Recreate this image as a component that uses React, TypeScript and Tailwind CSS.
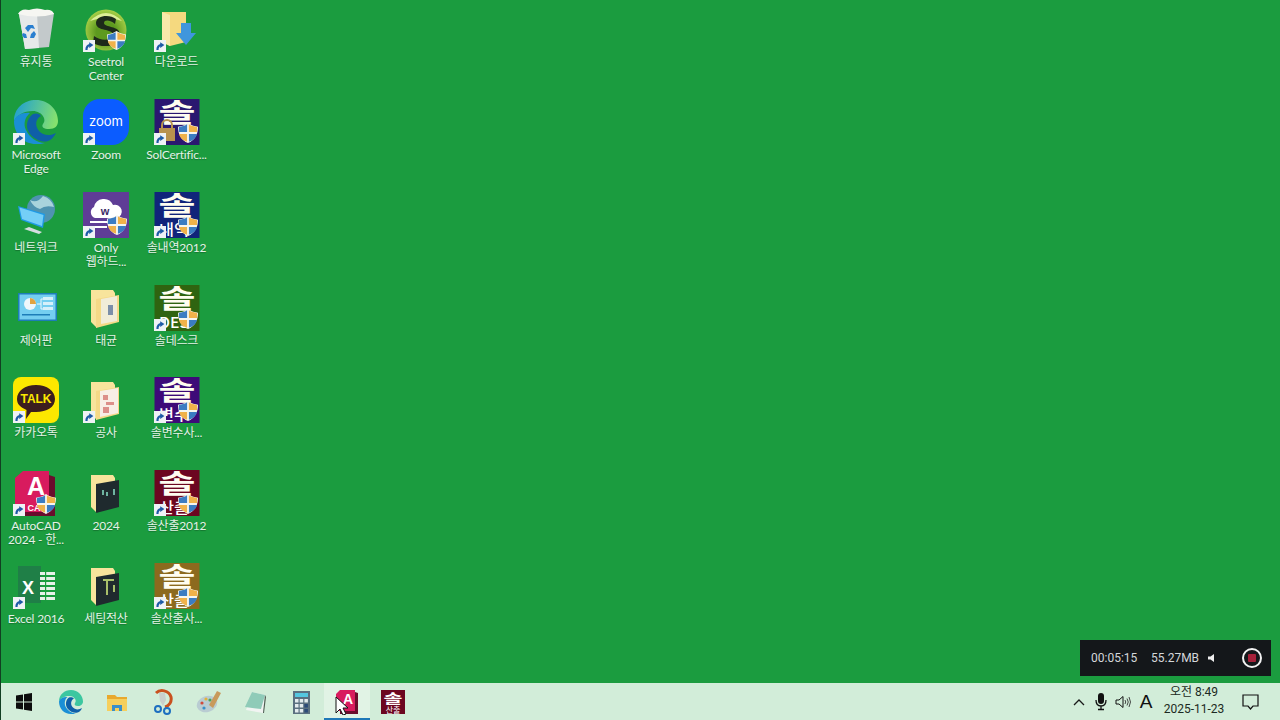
import type { ReactNode } from 'react';

const FONT = "font-['Lato','Noto_Sans_CJK_KR',sans-serif]";
const KR = "'Noto Sans CJK KR',sans-serif";
const ARIAL = "'Liberation Sans',sans-serif";

// small overlays used by most desktop icons
function Shield({ x = 24, y = 24, s = 20 }: { x?: number; y?: number; s?: number }) {
  return (
    <g transform={`translate(${x} ${y}) scale(${s / 22})`}>
      <path d="M11 0 C15 3 19 3.5 22 4 C22 13 18 19 11 22 C4 19 0 13 0 4 C3 3.5 7 3 11 0Z" fill="#f6f6ef" />
      <path d="M12 1.5 C15 3.5 18 4 21 4.5 L21 10 L12 10Z" fill="#f0b24a" />
      <path d="M1 12 L10 12 L10 20.5 C5 19 2 16 1 12Z" fill="#f0b24a" />
      <path d="M10 1.5 C7 3.5 4 4 1 4.5 L1 10 L10 10Z" fill="#3b7cc2" />
      <path d="M12 12 L21 12 C20 16 17 19 12 20.5Z" fill="#3b7cc2" />
    </g>
  );
}

function Shortcut({ x = 0, y = 34 }: { x?: number; y?: number }) {
  return (
    <g transform={`translate(${x} ${y})`}>
      <rect width="12" height="12" fill="#eef2f5" />
      <path d="M3.5 10 C3.2 7 5 5.2 7 5" fill="none" stroke="#1d5aa6" strokeWidth="2.2" />
      <path d="M6.2 2.2 L10.4 5 L6.2 8Z" fill="#1d5aa6" />
    </g>
  );
}

function Folder({ sheet = '#f5d987', children }: { sheet?: string; children?: ReactNode }) {
  return (
    <g>
      <path d="M8 5 H30 L32 8 V12 L14 16 V43 L8 37Z" fill="#f8e49c" />
      <path d="M13 14 L36 10 V37 L13 43Z" fill={sheet} />
      {children}
    </g>
  );
}

function SolIcon({ bg, sub, lock }: { bg: string; sub?: string; lock?: boolean }) {
  return (
    <>
      <rect x="0.5" width="45" height="46" fill={bg} />
      <text x="23" y="23" textAnchor="middle" fontSize="26" fontWeight="700" fill="#fffdf0" fontFamily={KR} textLength="37" lengthAdjust="spacingAndGlyphs">솔</text>
      {sub && (
        <text x="20" y="43" textAnchor="middle" fontSize="15" fontWeight="500" fill="#ffffff" fontFamily={KR} textLength="30" lengthAdjust="spacingAndGlyphs">{sub}</text>
      )}
      {lock && (
        <g>
          <rect x="5" y="29" width="16" height="13" fill="#b8924e" />
          <path d="M8 29 V26 a5 5 0 0 1 10 0 V29" fill="none" stroke="#b8924e" strokeWidth="2" />
        </g>
      )}
      <Shield x={24} y={24} s={20} />
      <Shortcut />
    </>
  );
}

const icons: Record<string, ReactNode> = {
  bin: (
    <>
      <path d="M6 8 L41 7 L36 41 L12 43Z" fill="#c3c9cb" />
      <path d="M6 8 L24 8 L26 42 L12 43Z" fill="#e6e9e9" />
      <path d="M5 8 Q8 2 16 4 Q24 1 32 4 Q39 3 41 8 Q24 13 5 8Z" fill="#f6f6f2" />
      <path d="M15 19 l5 0 l2 4 l-4 -1 l-3 4 l-3 -4Z M10 27 l3 1 l1 4 l-3 0 l-2 -3Z M21 25 l2 3 l-2 4 l-4 0 l1 -4Z" fill="#2a7fd0" />
    </>
  ),
  seetrol: (
    <>
      <defs>
        <radialGradient id="seeA" cx="0.5" cy="0.55" r="0.6">
          <stop offset="0.4" stopColor="#5d9a1f" />
          <stop offset="1" stopColor="#b5d94e" />
        </radialGradient>
      </defs>
      <circle cx="23" cy="24" r="20.5" fill="url(#seeA)" />
      <path d="M7 15 Q23 -1 39 15 Q23 9 7 15Z" fill="#dcee96" />
      <path d="M33 13 C27 8 13 9 13 17 C13 26 30 22 30 29 C30 35 17 35 11 30 L10 37 C18 42 37 42 37 29 C37 19 21 22 21 17 C21 13 28 14 32 18Z" fill="#1d2a1a" />
      <Shield x={24} y={25} s={19} />
      <Shortcut />
    </>
  ),
  download: (
    <>
      <path d="M8 6 H32 V36 L16 40 L8 36Z" fill="#f5d97f" />
      <path d="M8 6 L16 9 L16 40 L8 36Z" fill="#fae9aa" />
      <path d="M27 17 H37 V27 H42 L32 39 L22 27 H27Z" fill="#3f96dd" />
      <Shortcut />
    </>
  ),
  edge: (
    <>
      <defs>
        <linearGradient id="edgeA" x1="0" y1="0.3" x2="1" y2="0.5">
          <stop offset="0" stopColor="#1f9fd0" />
          <stop offset="1" stopColor="#86e16e" />
        </linearGradient>
      </defs>
      <path d="M1 22 C1 9 11 1 23 1 C36 1 45 11 45 22 C45 27 42 30 36 30 C31 30 28 28 30 25 C31 23 32 22 31 19 C29 14 24 12 20 12 C10 12 3 17 1 22Z" fill="url(#edgeA)" />
      <path d="M1 22 C3 16 10 13 17 14 C12 18 10 25 13 31 C16 38 24 44 32 44 C29 45 26 45 23 45 C10 45 1 35 1 22Z" fill="#1a8fd6" />
      <path d="M20 15 C13 20 12 29 17 35 C22 41 30 44 35 42 C38 41 41 38 43 34 C38 37 30 37 26 32 C22 27 22 20 28 17 C26 14 23 14 20 15Z" fill="#0f5fa8" />
      <Shortcut />
    </>
  ),
  zoom: (
    <>
      <rect width="46" height="46" rx="17" fill="#0b5cff" />
      <text x="23" y="27" textAnchor="middle" fontSize="13" fontWeight="400" fill="#fff" fontFamily="Inter,sans-serif">zoom</text>
      <Shortcut />
    </>
  ),
  network: (
    <>
      <circle cx="28" cy="17" r="14" fill="#4f93b0" />
      <path d="M17 8 Q24 12 30 4 Q39 7 41 15 Q32 13 27 17 Q20 15 17 8Z" fill="#a9d3dc" />
      <path d="M11 37 L26 42 L29 40 L16 35Z" fill="#d6dde0" />
      <path d="M5 14 L32 22 L30 36 L8 28Z" fill="#1e9ae6" />
      <path d="M6.5 15.5 L30.5 23 L29 34 L9 27Z" fill="#74cff7" />
    </>
  ),
  only: (
    <>
      <rect width="46" height="46" fill="#5f3d96" />
      <path d="M12 26 a6 6 0 0 1 -1 -11 a10 10 0 0 1 19 -2 a6.5 6.5 0 0 1 4 13Z" fill="#fff" />
      <text x="22" y="23" textAnchor="middle" fontSize="11" fontWeight="700" fill="#3b2a66" fontFamily={ARIAL}>w</text>
      <path d="M7 30 H28 M7 35 H24" stroke="#fff" strokeWidth="2" />
      <Shield x={24} y={23} s={20} />
      <Shortcut />
    </>
  ),
  panel: (
    <>
      <rect x="5" y="8" width="39" height="28" fill="#1d7db8" />
      <rect x="6.5" y="9.5" width="36" height="25" fill="#74cef0" />
      <circle cx="17" cy="19" r="6" fill="#eef7fb" />
      <path d="M17 19 V13 a6 6 0 0 1 6 6Z" fill="#e2a340" />
      <rect x="30" y="12" width="10" height="3" fill="#d6f0fa" />
      <rect x="30" y="17" width="10" height="3" fill="#d6f0fa" />
      <rect x="30" y="22" width="10" height="3" fill="#d6f0fa" />
      <path d="M24 19 H28 V14 H30 M28 19 V24 H30" fill="none" stroke="#eaf7fc" strokeWidth="1" />
      <rect x="9" y="29" width="28" height="1.5" fill="#1d7db8" />
    </>
  ),
  kakao: (
    <>
      <rect width="46" height="46" rx="8" fill="#fce800" />
      <path d="M23 8 C34 8 42 14 42 22 C42 30 34 35 23 35 L18 35 L13 42 L13.5 33 C7 30 4 27 4 22 C4 14 12 8 23 8Z" fill="#3b1e1e" />
      <text x="23" y="26" textAnchor="middle" fontSize="12" fontWeight="700" fill="#fce800" fontFamily={ARIAL}>TALK</text>
      <Shortcut />
    </>
  ),
  acad: (
    <>
      <path d="M2 8 L10 1 L36 1 L36 42 L2 42Z" fill="#d81b5e" />
      <path d="M36 5 L42 7 L42 46 L10 46 L10 42 L36 42Z" fill="#6a0d2c" />
      <text x="23" y="25" textAnchor="middle" fontSize="25" fontWeight="700" fill="#fff" fontFamily={ARIAL}>A</text>
      <text x="21" y="41" textAnchor="middle" fontSize="9" fontWeight="700" fill="#fff" fontFamily={ARIAL}>CA</text>
      <Shield x={23} y={24} s={20} />
      <Shortcut />
    </>
  ),
  excel: (
    <>
      <rect x="5" y="3" width="23" height="37" fill="#1f7f47" />
      <text x="15" y="31" textAnchor="middle" fontSize="18" fontWeight="700" fill="#fff" fontFamily={ARIAL}>X</text>
      {[9, 14, 19, 24, 29, 34].map((y) => (
        <rect key={y} x="27" y={y} width="15" height="3" fill="#e8f1ea" />
      ))}
      <rect x="32" y="9" width="1.2" height="28" fill="#1b9c3f" />
      <Shortcut />
    </>
  ),
};

const desktop: { label: string[]; icon: ReactNode }[] = [
  { label: ['휴지통'], icon: icons.bin },
  { label: ['Seetrol', 'Center'], icon: icons.seetrol },
  { label: ['다운로드'], icon: icons.download },
  { label: ['Microsoft', 'Edge'], icon: icons.edge },
  { label: ['Zoom'], icon: icons.zoom },
  { label: ['SolCertific...'], icon: <SolIcon bg="#2a1770" lock /> },
  { label: ['네트워크'], icon: icons.network },
  { label: ['Only', '웹하드...'], icon: icons.only },
  { label: ['솔내역2012'], icon: <SolIcon bg="#10247a" sub="내역" /> },
  { label: ['제어판'], icon: icons.panel },
  {
    label: ['태균'],
    icon: (
      <Folder>
        <path d="M18 14 L34 11 V36 L18 39Z" fill="#f1ecd8" />
        <path d="M25 20 h5 v10 h-5z" fill="#7c8ea8" />
      </Folder>
    ),
  },
  { label: ['솔데스크'], icon: <SolIcon bg="#2f6410" sub="DES" /> },
  { label: ['카카오톡'], icon: icons.kakao },
  {
    label: ['공사'],
    icon: (
      <>
        <Folder>
          <path d="M17 14 L35 11 V36 L17 40Z" fill="#f8eee6" />
          <path d="M20 18 h5 v5 h-5z M23 25 h8 v3 h-8z M20 30 h6 v6 h-6z" fill="#dc8f8a" />
        </Folder>
        <Shortcut />
      </>
    ),
  },
  { label: ['솔변수사...'], icon: <SolIcon bg="#3d0a78" sub="변수" /> },
  { label: ['AutoCAD', '2024 - 한...'], icon: icons.acad },
  {
    label: ['2024'],
    icon: (
      <Folder sheet="#1f2a2e">
        <path d="M20 20 v5 M24 22 v4 M31 19 v6" stroke="#6fb3a0" strokeWidth="2" />
      </Folder>
    ),
  },
  { label: ['솔산출2012'], icon: <SolIcon bg="#6c0620" sub="산출" /> },
  { label: ['Excel 2016'], icon: icons.excel },
  {
    label: ['세팅적산'],
    icon: (
      <Folder sheet="#1f2a2e">
        <path d="M20 17 h11 M24 17 v15 M31 22 v7" stroke="#a9c06a" strokeWidth="2" />
      </Folder>
    ),
  },
  { label: ['솔산출사...'], icon: <SolIcon bg="#8c6a1e" sub="산출" /> },
];

function TaskIcon({ children, active }: { children: ReactNode; active?: boolean }) {
  return (
    <div className={`relative flex h-full w-[46px] items-center justify-center ${active ? 'bg-[#e1f3e5]' : ''}`}>
      <svg width="26" height="26" viewBox="0 0 26 26">
        {children}
      </svg>
      {active && <div className="absolute bottom-0 left-0 h-[2px] w-full bg-[#1f78b8]" />}
    </div>
  );
}

export default function App() {
  return (
    <div className={`relative flex h-[720px] w-[1280px] flex-col overflow-hidden border-l border-[#123f22] bg-[#1b9c3f] ${FONT}`}>
      {/* desktop icons */}
      <div className="grid flex-1 grid-cols-[70px_70px_71px] auto-rows-[92.86px] content-start pt-[6px]">
        {desktop.map((d) => (
          <div key={d.label.join('')} className="flex flex-col items-center">
            <svg width="46" height="46" viewBox="0 0 46 46" className="shrink-0">
              {d.icon}
            </svg>
            <div className="mt-[3px] w-[70px] text-center text-[12px] leading-[14px] tracking-[-0.2px] text-[#e4f3e7] [text-shadow:0_1px_1px_rgba(0,0,0,0.25)]">
              {d.label.map((l) => (
                <div key={l} className="whitespace-nowrap">{l}</div>
              ))}
            </div>
          </div>
        ))}
      </div>

      {/* recorder overlay */}
      <div className="absolute left-[1079px] top-[640px] flex h-[36px] w-[191px] items-center bg-[#14171a] font-['Roboto',sans-serif] text-[12px] text-[#d5d8da]">
        <span className="ml-[11px] w-[60px]">00:05:15</span>
        <span className="w-[56px]">55.27MB</span>
        <svg width="10" height="10" viewBox="0 0 10 10">
          <path d="M1 3.5 H3.5 L7 1 V9 L3.5 6.5 H1Z" fill="#eee" />
        </svg>
        <div className="ml-[25px] flex h-[20px] w-[20px] items-center justify-center rounded-full border-2 border-[#f3f3f3]">
          <div className="h-[8px] w-[8px] rounded-[1px] bg-[#a5213a]" />
        </div>
      </div>

      {/* taskbar */}
      <div className="flex h-[37px] shrink-0 items-center bg-[#d2edd9] text-[#1d2a22]">
        <TaskIcon>
          <path d="M5 6.5 L12 5.5 V12.5 H5Z M13 5.3 L21 4 V12.5 H13Z M5 13.5 H12 V20.5 L5 19.5Z M13 13.5 H21 V22 L13 20.7Z" fill="#0d0d0d" />
        </TaskIcon>
        <div className="w-[1px]" />
        <TaskIcon>
          <path d="M1 12.5 C1 5.5 6.5 1 13 1 C20 1 25 6.5 25 12.5 C25 15 23 17 20 17 C17 17 16 16 17 14 C17.6 13 18 12 17.4 10.5 C16 8 14 7 11.5 7 C6 7 2.5 9.5 1 12.5Z" fill="#3cc7a0" />
          <path d="M1 12.5 C2 9 6 7.5 9.5 8 C7 10 6 14 7.5 17.5 C9 21 13 24 18 24.5 C16.5 25 15 25 13 25 C6 25 1 19.5 1 12.5Z" fill="#1a8fd6" />
          <path d="M11 8.5 C7.5 11 7 16 9.5 19.5 C12 23 17 24.5 19.5 23.5 C21.5 23 23 21.5 24 19 C21 21 17 21 14.5 18 C12.5 15.5 12.5 11.5 16 9.5 C14.5 8 12.5 8 11 8.5Z" fill="#0f5fa8" />
        </TaskIcon>
        <TaskIcon>
          <path d="M3 6 H11 L13 8 H23 V11 H3Z" fill="#e8a92e" />
          <rect x="3" y="10" width="20" height="12" fill="#f6cf5c" />
          <path d="M8 22 V16 H18 V22 H15 V19 H11 V22Z" fill="#3a8fc9" />
        </TaskIcon>
        <TaskIcon>
          <path d="M6 4 C10 0 19 1 21 8 C22 13 19 17 15 18" fill="none" stroke="#c9511f" strokeWidth="3" />
          <path d="M9 4 L15 4 L16 11 L13 17 L10 12Z" fill="#c9cfcc" />
          <circle cx="8" cy="20" r="3" fill="none" stroke="#1d6fc0" strokeWidth="2" />
          <circle cx="17" cy="22" r="3" fill="none" stroke="#1d6fc0" strokeWidth="2" />
        </TaskIcon>
        <TaskIcon>
          <ellipse cx="11" cy="15" rx="10.5" ry="8" fill="#b9ccd2" transform="rotate(-20 11 15)" />
          <circle cx="6" cy="14" r="1.6" fill="#d24a3a" />
          <circle cx="10" cy="10" r="1.6" fill="#e3b23a" />
          <circle cx="8" cy="19" r="1.6" fill="#3a8fc9" />
          <circle cx="14" cy="11" r="1.6" fill="#4ea35a" />
          <path d="M13 16 L21 2 L25 4 L17 19Z" fill="#c89a5c" />
        </TaskIcon>
        <TaskIcon>
          <path d="M10 3 L23 6 L21 24 L4 21Z" fill="#f1f4f2" />
          <path d="M10 3 L23 6 L19 20 L3 18Z" fill="#8fcbb8" />
          <path d="M23 6 L24 8 L22 24 L21 24Z" fill="#4d5a50" />
        </TaskIcon>
        <TaskIcon>
          <rect x="5" y="2" width="17" height="23" fill="#5b7080" />
          <rect x="7" y="4" width="13" height="4" fill="#54c7e0" />
          {[10, 15, 20].map((y) => (
            <g key={y}>
              <rect x="7" y={y} width="3.5" height="3.5" fill="#e4ebee" />
              <rect x="11.7" y={y} width="3.5" height="3.5" fill="#e4ebee" />
              <rect x="16.4" y={y} width="3.5" height="3.5" fill={y === 10 ? '#e4ebee' : '#2c4a78'} />
            </g>
          ))}
        </TaskIcon>
        <TaskIcon active>
          <path d="M2 5 L6 1 L21 1 L21 22 L2 22Z" fill="#d81b5e" />
          <path d="M21 3 L24 4 L24 25 L6 25 L6 22 L21 22Z" fill="#6a0d2c" />
          <text x="14" y="15" textAnchor="middle" fontSize="14" fontWeight="700" fill="#fff" fontFamily={ARIAL}>A</text>
          <path d="M2 8 L2 24 L6 20 L9 26 L12 25 L9 19 L14 19Z" fill="#fff" stroke="#111" strokeWidth="1" />
        </TaskIcon>
        <TaskIcon>
          <rect x="1" y="1" width="24" height="24" fill="#6c0620" />
          <text x="13" y="14" textAnchor="middle" fontSize="13" fontWeight="700" fill="#fff" fontFamily={KR} textLength="19" lengthAdjust="spacingAndGlyphs">솔</text>
          <text x="13" y="24" textAnchor="middle" fontSize="8" fill="#fff" fontFamily={KR}>산출</text>
        </TaskIcon>

        {/* tray */}
        <div className="ml-auto flex h-full items-center">
          <svg width="12" height="8" viewBox="0 0 12 8" className="mr-[9px]">
            <path d="M1 7 L6 2 L11 7" fill="none" stroke="#1a1a1a" strokeWidth="1.3" />
          </svg>
          <svg width="14" height="18" viewBox="0 0 14 18" className="mr-[7px]">
            <rect x="4" y="0" width="6" height="11" rx="3" fill="#111" />
            <path d="M2 7 C2 12 5 13 7 13 C9 13 12 12 12 7 M7 13 V16 M4 16.5 H10" fill="none" stroke="#111" strokeWidth="1.3" />
          </svg>
          <svg width="16" height="14" viewBox="0 0 16 14" className="mr-[8px]">
            <path d="M1 5 H4 L8 1.5 V12.5 L4 9 H1Z" fill="none" stroke="#111" strokeWidth="1" />
            <path d="M10 5 Q11.5 7 10 9 M12 3.5 Q14.5 7 12 10.5 M14 2 Q17 7 14 12" fill="none" stroke="#333" strokeWidth="0.9" />
          </svg>
          <span className="mr-[8px] w-[14px] text-center font-['Liberation_Sans',sans-serif] text-[19px] leading-none text-[#111]">A</span>
          <div className="w-[66px] pb-[2px] text-center font-['Roboto','Noto_Sans_CJK_KR',sans-serif] text-[12px] leading-[17px] text-[#1c2a22]">
            <div>오전 8:49</div>
            <div>2025-11-23</div>
          </div>
          <div className="ml-[6px] mr-[13px] flex w-[34px] items-center justify-center">
            <svg width="17" height="16" viewBox="0 0 17 16">
              <path d="M1 1 H16 V12 H11 L8.5 15 L6 12 H1Z" fill="none" stroke="#111" strokeWidth="1.2" />
            </svg>
          </div>
        </div>
      </div>
    </div>
  );
}
